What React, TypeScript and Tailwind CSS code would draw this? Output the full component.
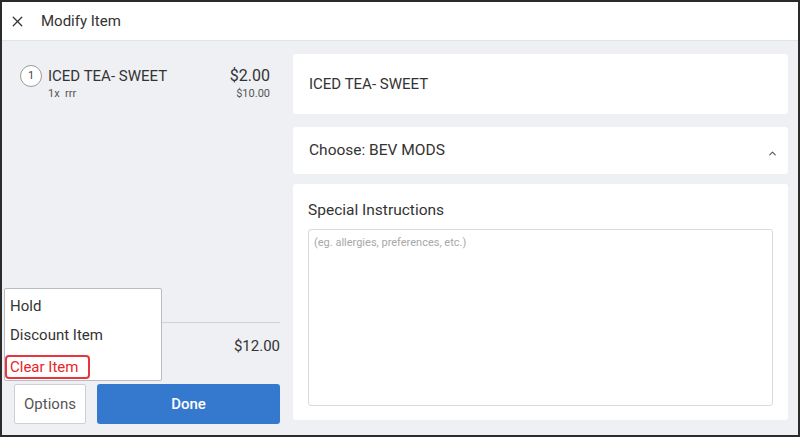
import { X, ChevronUp } from 'lucide-react'

export default function App() {
  return (
    <div
      className="w-[800px] h-[437px] border-2 border-[#2b2b2b] flex flex-col bg-[#eef0f4] text-[#3c3c3c] overflow-hidden"
      style={{ fontFamily: 'Roboto, "Noto Sans", sans-serif' }}
    >
      <header className="h-[39px] shrink-0 bg-white border-b border-[#e2e4e8] flex items-center pl-[7px]">
        <X size={17} strokeWidth={1.8} className="text-[#333]" />
        <span className="ml-[15px] text-[15px] text-[#333]">Modify Item</span>
      </header>

      <div className="flex-1 flex min-h-0">
        {/* left column */}
        <div className="relative w-[287px] shrink-0 flex flex-col pl-[12px] pr-[9px] pt-[24px] pb-[11px]">
          <div className="flex items-start pl-[6px] pr-[10px]">
            <div className="w-[22px] h-[22px] rounded-full border border-[#9a9a9a] bg-white flex items-center justify-center text-[11px] text-[#444] shrink-0">
              1
            </div>
            <div className="ml-[6px] flex-1">
              <div className="flex items-center justify-between leading-[22px]">
                <span className="text-[15px] text-[#333]">ICED TEA- SWEET</span>
                <span className="text-[16px] text-[#333]">$2.00</span>
              </div>
              <div className="flex items-center justify-between leading-[12px] mt-[1px]">
                <span className="text-[11px] text-[#555]">1x&nbsp; rrr</span>
                <span className="text-[11px] text-[#555]">$10.00</span>
              </div>
            </div>
          </div>

          <div className="flex-1" />

          <div className="border-t border-[#cfd2d8] ml-[2px]" />
          <div className="flex justify-end h-[46px] items-center">
            <span className="text-[15px] text-[#333]">$12.00</span>
          </div>

          <div className="flex gap-[11px] h-[40px] mt-[15px]">
            <button className="w-[72px] bg-white border border-[#cdd0d6] rounded-[2px] text-[15px] text-[#555]">
              Options
            </button>
            <button className="flex-1 bg-[#3479cd] rounded-[3px] text-white text-[15px] font-medium">
              Done
            </button>
          </div>

          {/* options popup */}
          <div className="absolute left-[2px] top-[247px] w-[158px] h-[93px] bg-white border border-[#b9bcc2] rounded-[2px] flex flex-col pt-[4px]">
            <div className="h-[26px] flex items-center pl-[5px] text-[15px] text-[#333]">Hold</div>
            <div className="h-[33px] flex items-center pl-[5px] text-[15px] text-[#333]">Discount Item</div>
            <div className="mt-[3px] w-[85px] h-[24px] flex items-center pl-[3px] text-[15px] text-[#e8242b] border-2 border-[#e8343a] rounded-[4px]">
              Clear Item
            </div>
          </div>
        </div>

        {/* right column */}
        <div className="flex-1 flex flex-col gap-[13px] pt-[13px] pb-[15px] pl-[4px] pr-[10px]">
          <div className="h-[60px] shrink-0 bg-white rounded-[3px] flex items-center px-[16px] text-[15px] text-[#333]">
            ICED TEA- SWEET
          </div>
          <div className="h-[47px] shrink-0 bg-white rounded-[3px] flex items-center justify-between pl-[16px] pr-[10px] -mb-[3px]">
            <span className="text-[15.5px] text-[#333]">Choose: BEV MODS</span>
            <ChevronUp size={11} strokeWidth={2.4} className="text-[#555] mt-[5px]" />
          </div>
          <div className="flex-1 bg-white rounded-[3px] flex flex-col px-[15px] pt-[17px] pb-[14px]">
            <div className="text-[15.5px] text-[#333] leading-[18px]">Special Instructions</div>
            <textarea
              className="mt-[10px] flex-1 resize-none border border-[#d6d9de] rounded-[3px] px-[5px] py-[5px] text-[11px] text-[#444] placeholder:text-[#a8a8a8] outline-none"
              placeholder="(eg. allergies, preferences, etc.)"
            />
          </div>
        </div>
      </div>
    </div>
  )
}
